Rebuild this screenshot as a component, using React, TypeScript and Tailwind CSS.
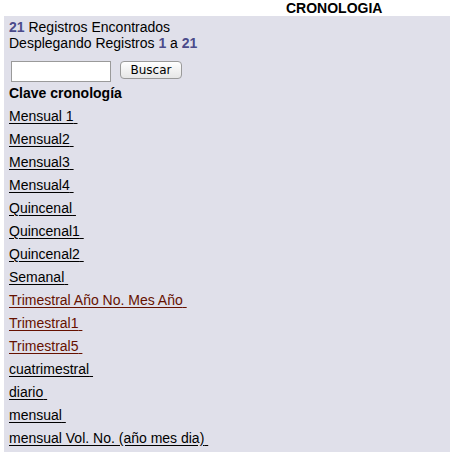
const claves = [
  { label: "Mensual 1", visited: false },
  { label: "Mensual2", visited: false },
  { label: "Mensual3", visited: false },
  { label: "Mensual4", visited: false },
  { label: "Quincenal", visited: false },
  { label: "Quincenal1", visited: false },
  { label: "Quincenal2", visited: false },
  { label: "Semanal", visited: false },
  { label: "Trimestral Año No. Mes Año", visited: true },
  { label: "Trimestral1", visited: true },
  { label: "Trimestral5", visited: true },
  { label: "cuatrimestral", visited: false },
  { label: "diario", visited: false },
  { label: "mensual", visited: false },
  { label: "mensual Vol. No. (año mes dia)", visited: false },
];

export default function App() {
  return (
    <div className="w-[451px] h-[452px] bg-white overflow-hidden font-['Liberation_Sans',Arial,sans-serif] text-black">
      <div className="h-[16px] pl-[286px] text-[14px] font-bold leading-[16px]">CRONOLOGIA</div>
      <div className="ml-[4px] w-[446px] h-[436px] bg-[#e0e0ea] pl-[5px] pt-[3px]">
        <div className="text-[14px] leading-[16px]">
          <span className="font-bold text-[#4b4b8a]">21</span> Registros Encontrados
        </div>
        <div className="text-[14px] leading-[16px]">
          Desplegando Registros <span className="font-bold text-[#4b4b8a]">1</span> a{" "}
          <span className="font-bold text-[#4b4b8a]">21</span>
        </div>
        <form className="flex items-start gap-[9px] mt-[10px] ml-[2px]" onSubmit={(e) => e.preventDefault()}>
          <input
            type="text"
            className="w-[100px] h-[21px] bg-white border border-[#9a9a9a] outline-none"
          />
          <button
            type="submit"
            className="w-[62px] h-[18px] rounded-[4px] border border-[#9a9a9a] bg-gradient-to-b from-white to-[#e6e6e6] text-[12px] leading-[16px] font-['DejaVu_Sans',sans-serif] text-black"
          >
            Buscar
          </button>
        </form>
        <div className="text-[14px] font-bold leading-[16px] mt-[3px]">Clave cronología</div>
        <ul className="mt-[4px]">
          {claves.map((c) => (
            <li key={c.label} className="h-[23px] text-[14px] leading-[23px]">
              <a
                href="#"
                className={`underline underline-offset-[2px] ${c.visited ? "text-[#661100]" : "text-black"}`}
              >
                {c.label}&nbsp;
              </a>
            </li>
          ))}
        </ul>
      </div>
    </div>
  );
}
